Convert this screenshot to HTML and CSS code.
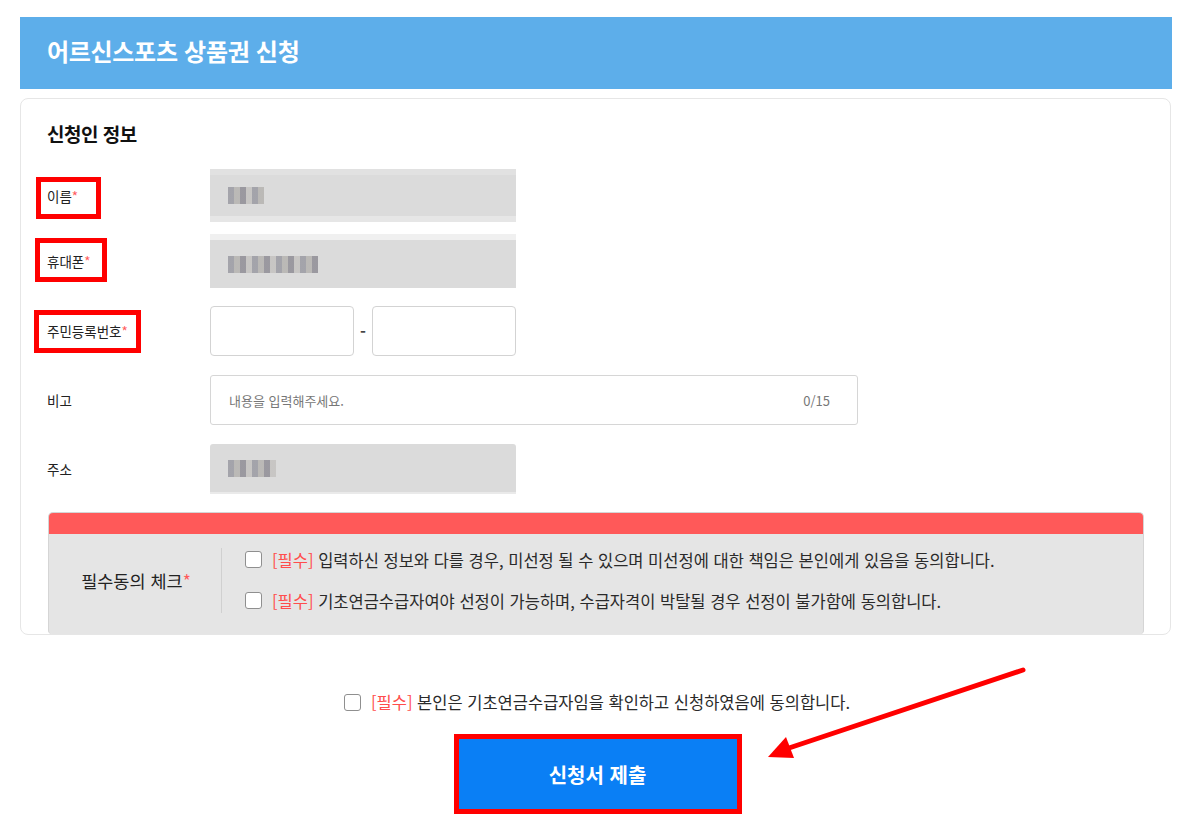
FILE: index.html
```html
<!DOCTYPE html>
<html lang="ko">
<head>
<meta charset="utf-8">
<title>어르신스포츠 상품권 신청</title>
<link rel="stylesheet" href="styles.css">
</head>
<body>
<div class="page">
  <header class="head"><h1>어르신스포츠 상품권 신청</h1></header>
  <section class="card">
    <h2 class="sec-title">신청인 정보</h2>
    <div class="rows">
      <div class="row row-name">
        <div class="label">이름<span class="req">*</span><span class="mark mark1"></span></div>
        <div class="field gray g-name"><span class="mosaic m-name"></span></div>
      </div>
      <div class="row row-phone">
        <div class="label">휴대폰<span class="req">*</span><span class="mark mark2"></span></div>
        <div class="field gray g-phone"><span class="mosaic m-phone"></span></div>
      </div>
      <div class="row row-rrn">
        <div class="label">주민등록번호<span class="req">*</span><span class="mark mark3"></span></div>
        <div class="rrn">
          <div class="box"></div>
          <span class="dash">-</span>
          <div class="box"></div>
        </div>
      </div>
      <div class="row row-memo">
        <div class="label">비고</div>
        <div class="memo"><span class="ph">내용을 입력해주세요.</span><span class="count">0/15</span></div>
      </div>
      <div class="row row-addr">
        <div class="label">주소</div>
        <div class="field gray g-addr"><span class="mosaic m-addr"></span></div>
      </div>
    </div>
    <div class="agree">
      <div class="agree-bar"></div>
      <div class="agree-body">
        <div class="agree-label">필수동의 체크<span class="req">*</span></div>
        <div class="agree-list">
          <label class="chk"><span class="cb"></span><span class="tag">[필수]</span> 입력하신 정보와 다를 경우, 미선정 될 수 있으며 미선정에 대한 책임은 본인에게 있음을 동의합니다.</label>
          <label class="chk"><span class="cb"></span><span class="tag">[필수]</span> 기초연금수급자여야 선정이 가능하며, 수급자격이 박탈될 경우 선정이 불가함에 동의합니다.</label>
        </div>
      </div>
    </div>
  </section>
  <div class="final">
    <label class="chk"><span class="cb"></span><span class="tag">[필수]</span> 본인은 기초연금수급자임을 확인하고 신청하였음에 동의합니다.</label>
  </div>
  <div class="submit-wrap">
    <button class="submit">신청서 제출</button>
  </div>
  <svg class="arrow" width="280" height="110" viewBox="0 0 280 110">
    <line x1="263" y1="12" x2="20" y2="93" stroke="#ff0000" stroke-width="5" stroke-linecap="round"/>
    <polygon points="8,99 26,79 34,100" fill="#ff0000"/>
  </svg>
</div>
</body>
</html>
```

FILE: styles.css
```css
* { box-sizing: border-box; }
html, body { margin: 0; padding: 0; background: #fff; }
body {
  font-family: "Noto Sans CJK KR", "Noto Sans", sans-serif;
  color: #222;
}
.page {
  position: relative;
  width: 1152px;
  margin-left: 20px;
  padding-top: 17px;
}
.head {
  height: 72px;
  background: #5daeea;
  display: flex;
  align-items: center;
  padding-left: 27px;
  padding-bottom: 4px;
}
.head h1 {
  margin: 0;
  color: #fff;
  font-size: 24px;
  font-weight: 700;
  line-height: 30px;
  letter-spacing: -0.3px;
}
.card {
  margin-top: 9px;
  border: 1px solid #e6e6e6;
  border-radius: 8px;
  padding: 22px 27px 0 26px;
  width: 1151px;
}
.sec-title {
  margin: 0;
  font-size: 19px;
  font-weight: 700;
  line-height: 26px;
  letter-spacing: -0.5px;
  color: #111;
}
.rows { display: flex; flex-direction: column; }
.row {
  display: flex;
  align-items: center;
}
.label {
  position: relative;
  width: 163px;
  font-size: 13.5px;
  line-height: 20px;
  color: #222;
}
.req { color: #ff5a5a; }
.mark {
  position: absolute;
  border: 5px solid #ff0000;
}
.mark1 { left: -11px; top: -9px; width: 65px; height: 42px; }
.mark2 { left: -12px; top: -13px; width: 72px; height: 44px; }
.mark3 { left: -13px; top: -11px; width: 107px; height: 43px; }

.row-name { margin-top: 22px; }
.row-phone { margin-top: 12px; }
.row-rrn { margin-top: 18px; }
.row-memo { margin-top: 19px; }
.row-addr { margin-top: 19px; }

.field {
  width: 306px;
  height: 50px;
  display: flex;
  align-items: center;
  padding-left: 18px;
}
.gray { background: #dbdbdb; }
.g-name { height: 53px; border-top: 6px solid #e1e1e1; border-bottom: 6px solid #e6e6e6; }
.g-phone { height: 54px; border-top: 6px solid #f0f0f0; }
.g-addr { height: 50px; border-bottom: 2px solid #eaeaea; border-radius: 3px 3px 0 0; }
.mosaic {
  display: block;
  height: 17px;
  background:
    repeating-linear-gradient(90deg, #9a9aa2 0 6px, #b5b3b0 6px 12px, #8f8d95 12px 18px, #c4c2c0 18px 24px);
  opacity: 0.85;
}
.m-name { width: 36px; }
.m-phone { width: 90px; }
.m-addr { width: 48px; }

.rrn { display: flex; align-items: center; }
.box {
  width: 144px;
  height: 50px;
  border: 1px solid #d3d3d3;
  border-radius: 4px;
  background: #fff;
}
.dash { width: 18px; text-align: center; font-size: 16px; font-weight: 700; color: #444; }

.memo {
  width: 648px;
  height: 50px;
  border: 1px solid #d6d6d6;
  border-radius: 3px;
  display: flex;
  align-items: center;
  justify-content: space-between;
  padding: 0 27px 0 18px;
  font-size: 13px;
  color: #777;
}

.agree {
  margin-top: 18px;
  margin-left: 1px;
  width: 1096px;
  border: 1px solid #d5d5d5;
  border-bottom: none;
  border-radius: 5px 5px 4px 4px;
  overflow: hidden;
  background: #e5e5e5;
}
.agree-bar { height: 21px; background: #ff5959; }
.agree-body {
  display: flex;
  align-items: center;
  height: 100px;
  padding-bottom: 8px;
}
.agree-label {
  width: 172px;
  text-align: center;
  font-size: 17.5px;
  color: #222;
  padding-left: 2px;
}
.agree-list {
  border-left: 1px solid #d0d0d0;
  padding-left: 23px;
  display: flex;
  flex-direction: column;
  gap: 17px;
}
.chk {
  display: flex;
  align-items: center;
  font-size: 16.5px;
  color: #2a2a2a;
  white-space: pre;
}
.cb {
  width: 17px;
  height: 17px;
  border: 1px solid #8f8f8f;
  border-radius: 3px;
  background: #fff;
  margin-right: 10px;
  flex: none;
}
.tag { color: #ff4d4d; }

.final {
  display: flex;
  justify-content: center;
  margin-top: 55px;
  padding-left: 2px;
}
.submit-wrap {
  display: flex;
  justify-content: center;
  margin-top: 20px;
  padding-left: 3px;
}
.submit {
  width: 288px;
  height: 80px;
  background: #0a7ff5;
  border: 5px solid #ff0000;
  color: #fff;
  font-family: "Noto Sans CJK KR", "Noto Sans", sans-serif;
  font-size: 20px;
  font-weight: 700;
  cursor: pointer;
}
.arrow {
  position: absolute;
  left: 740px;
  top: 658px;
}
```
